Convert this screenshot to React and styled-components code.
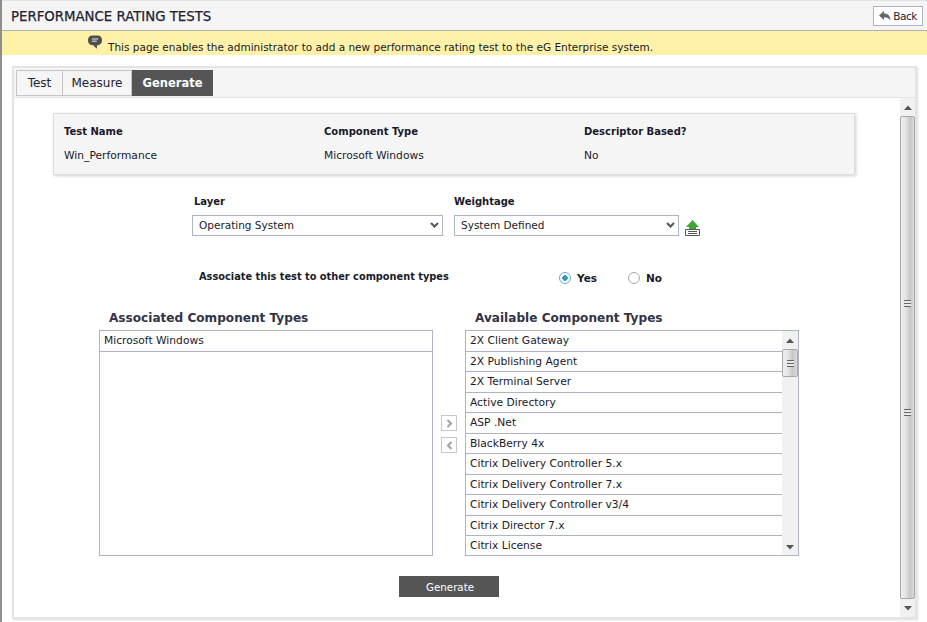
import styled, { createGlobalStyle } from "styled-components";

const GlobalStyle = createGlobalStyle`
  html, body {
    margin: 0;
    padding: 0;
    background: #ffffff;
    overflow: hidden;
  }
  body {
    font-family: "DejaVu Sans", Verdana, sans-serif;
    font-size: 11px;
    color: #1a1a2a;
  }
`;

const Page = styled.div`
  width: 927px;
  height: 622px;
  box-sizing: border-box;
  border-left: 2px solid #8e8e8e;
  display: flex;
  flex-direction: column;
  overflow: hidden;
`;

const TitleBar = styled.div`
  height: 31px;
  box-sizing: border-box;
  flex: none;
  display: flex;
  align-items: center;
  justify-content: space-between;
  padding: 0 4px 0 9px;
  background: #f5f5f5;
  border-top: 1px solid #e2e2e2;
  border-bottom: 1px solid #aeb2bc;
`;

const Title = styled.div`
  font-size: 13.3px;
  font-weight: 400;
  margin-top: 2px;
  color: #222233;
  -webkit-text-stroke: 0.25px #222233;
`;

const BackButton = styled.button`
  width: 50px;
  height: 20px;
  box-sizing: border-box;
  display: flex;
  align-items: center;
  justify-content: center;
  gap: 2px;
  padding: 0;
  background: #ffffff;
  border: 1px solid #aeb4c4;
  font: 10.5px "DejaVu Sans", sans-serif;
  letter-spacing: -0.5px;
  color: #222233;
`;

const Notice = styled.div`
  height: 24px;
  flex: none;
  display: flex;
  align-items: flex-end;
  background: #fff2a8;
  padding-left: 85px;
  box-sizing: border-box;
`;

const NoticeIcon = styled.svg`
  margin-bottom: 5px;
  flex: none;
`;

const NoticeText = styled.span`
  font-size: 10.5px;
  line-height: 15px;
  margin-left: 5px;
  white-space: nowrap;
`;

const Panel = styled.div`
  margin: 11px 10px 3px 10px;
  flex: 1;
  min-height: 0;
  border: 2px solid #e4e4e4;
  display: flex;
  flex-direction: column;
  box-shadow: 1px 1px 2px #dddddd;
`;

const TabBar = styled.div`
  flex: none;
  height: 30px;
  box-sizing: border-box;
  background: #f5f5f5;
  border-bottom: 1px solid #e4e4e4;
  padding: 2px 0 0 2px;
  display: flex;
  align-items: flex-start;
`;

const Tab = styled.div`
  width: ${({ $width }) => $width}px;
  height: 26px;
  box-sizing: border-box;
  display: flex;
  align-items: center;
  justify-content: center;
  font-size: ${({ $active }) => ($active ? "11.5px" : "12px")};
  background: ${({ $active }) => ($active ? "#555555" : "#f5f5f5")};
  color: ${({ $active }) => ($active ? "#ffffff" : "#222233")};
  font-weight: ${({ $active }) => ($active ? 700 : 400)};
  border: ${({ $active }) => ($active ? "none" : "1px solid #c4c4c4")};
  border-left: ${({ $first }) => ($first ? "1px solid #c4c4c4" : "none")};
`;

const Body = styled.div`
  flex: 1;
  min-height: 0;
  display: flex;
  background: #ffffff;
`;

const Content = styled.div`
  flex: 1;
  min-width: 0;
  padding-top: 15px;
  display: flex;
  flex-direction: column;
`;

const SummaryCard = styled.div`
  margin: 0 45px 0 39px;
  height: 62px;
  box-sizing: border-box;
  background: #f5f5f5;
  border: 1px solid #dedede;
  box-shadow: 1px 1px 3px #d0d0d0;
  display: grid;
  grid-template-columns: 260px 260px 1fr;
  grid-template-rows: 1fr 1fr;
  align-items: center;
  padding: 5px 10px 7px 10px;
`;

const SummaryHead = styled.div`
  font-weight: 700;
  font-size: 10px;
`;

const SummaryValue = styled.div`
  font-size: 10.7px;
`;

const SelectRow = styled.div`
  margin: 20px 0 0 178px;
  display: flex;
  gap: 11px;
  align-items: flex-end;
`;

const Field = styled.div`
  width: ${({ $width }) => $width}px;
`;

const FieldLabel = styled.div`
  font-weight: 700;
  font-size: 10px;
  margin: 0 0 6px ${({ $indent }) => $indent || 0}px;
  line-height: 14px;
`;

const SelectBox = styled.div`
  height: 21px;
  box-sizing: border-box;
  border: 1px solid #aeb4c4;
  display: flex;
  align-items: center;
  justify-content: space-between;
  padding: 0 3px 1px 6px;
  font-size: 10.5px;
`;

const UploadIcon = styled.svg`
  margin: 0 0 0 -5px;
  flex: none;
`;

const AssociateRow = styled.div`
  margin: 33px 0 0 185px;
  display: flex;
  align-items: center;
  height: 16px;
`;

const AssociateLabel = styled.div`
  width: 360px;
  font-weight: 700;
  font-size: 9.8px;
  position: relative;
  top: -1px;
`;

const RadioOption = styled.label`
  display: flex;
  align-items: center;
  gap: 6px;
  width: 69px;
  font-weight: 700;
  font-size: 10.5px;
  position: relative;
  top: 1px;
`;

const RadioDot = styled.span`
  width: 12px;
  height: 12px;
  box-sizing: border-box;
  border-radius: 50%;
  border: 1px solid ${({ $on }) => ($on ? "#6aa9c9" : "#a9a9a9")};
  background: ${({ $on }) => ($on ? "radial-gradient(circle, #2f97c6 0 2.5px, #ffffff 3px)" : "#ffffff")};
`;

const Lists = styled.div`
  margin: 25px 0 0 85px;
  display: flex;
  align-items: flex-end;
`;

const ListColumn = styled.div`
  width: 334px;
`;

const ListTitle = styled.div`
  font-size: 12.1px;
  font-weight: 700;
  color: #333344;
  line-height: 16px;
  margin: 0 0 4px 10px;
`;

const ListBox = styled.div`
  height: 226px;
  box-sizing: border-box;
  border: 1px solid #aeb4c4;
  display: flex;
  overflow: hidden;
`;

const ListRows = styled.div`
  flex: 1;
  min-width: 0;
`;

const ListRow = styled.div`
  height: 20.5px;
  box-sizing: border-box;
  line-height: 20px;
  padding-left: 4px;
  font-size: 10.7px;
  border-bottom: ${({ $last }) => ($last ? "none" : "1px solid #aeb4c4")};
  white-space: nowrap;
`;

const MoveButtons = styled.div`
  width: 32px;
  flex: none;
  display: flex;
  flex-direction: column;
  align-items: center;
  gap: 6px;
  padding-bottom: 103px;
`;

const MoveButton = styled.div`
  width: 16px;
  height: 16px;
  box-sizing: border-box;
  border: 1px solid #c2c7d2;
  background: #ffffff;
  display: flex;
  align-items: center;
  justify-content: center;
`;

const GenerateWrap = styled.div`
  margin: 20px 0 0 385px;
`;

const GenerateButton = styled.button`
  width: 100px;
  height: 21px;
  border: none;
  padding: 0 0 0 2px;
  background: #555555;
  color: #ffffff;
  font: 10.3px "DejaVu Sans", sans-serif;
`;

const ScrollTrack = styled.div`
  width: ${({ $width }) => $width}px;
  flex: none;
  background: #f1f1f1;
  display: flex;
  flex-direction: column;
  align-items: stretch;
  box-sizing: border-box;
`;

const ScrollArrow = styled.div`
  height: ${({ $height }) => $height}px;
  flex: none;
  display: flex;
  align-items: center;
  justify-content: center;
  color: #555555;
`;

const ScrollThumb = styled.div`
  flex: ${({ $height }) => ($height ? "none" : 1)};
  height: ${({ $height }) => ($height ? `${$height}px` : "auto")};
  box-sizing: border-box;
  border: 1px solid #a8a8a8;
  border-radius: 2px;
  background: linear-gradient(to right, #f0f0f0, #e2e2e2 40%, #c6c6ca 70%, #dcdcdc);
  display: flex;
  flex-direction: column;
  justify-content: center;
  gap: ${({ $gap }) => $gap || 0}px;
  align-items: center;
`;

const ScrollSpacer = styled.div`
  flex: 1;
`;

const GripLines = styled.div`
  width: 7px;
  height: 7px;
  background: repeating-linear-gradient(to bottom, #666666 0 1px, #e8e8e8 1px 3px);
`;

const Arrow = ({ down }) => (
  <svg width="8" height="5" viewBox="0 0 8 5">
    <path d={down ? "M0 0H8L4 4.5Z" : "M0 5H8L4 0.5Z"} fill="#555555" />
  </svg>
);

const Chevron = () => (
  <svg width="9" height="6" viewBox="0 0 9 6">
    <path d="M1 1L4.5 4.5L8 1" fill="none" stroke="#555555" strokeWidth="2" />
  </svg>
);

const available = [
  "2X Client Gateway",
  "2X Publishing Agent",
  "2X Terminal Server",
  "Active Directory",
  "ASP .Net",
  "BlackBerry 4x",
  "Citrix Delivery Controller 5.x",
  "Citrix Delivery Controller 7.x",
  "Citrix Delivery Controller v3/4",
  "Citrix Director 7.x",
  "Citrix License",
];

export default function App() {
  return (
    <Page>
      <GlobalStyle />
      <TitleBar>
        <Title>PERFORMANCE RATING TESTS</Title>
        <BackButton>
          <svg width="12" height="10" viewBox="0 0 12 10">
            <path d="M0 4.5L5 0V2.6C9 2.6 11.5 5 11.5 9.5C10 6.8 8 6.2 5 6.2V9Z" fill="#666666" />
          </svg>
          Back
        </BackButton>
      </TitleBar>
      <Notice>
        <NoticeIcon width="16" height="15" viewBox="0 0 18 17">
          <path d="M6 0.5H12C15 0.5 17 2.5 17 6C17 9.5 15 11.5 12 11.5H11.5L11 15.5L7 11.5H6C3 11.5 1 9.5 1 6C1 2.5 3 0.5 6 0.5Z" fill="#505050" />
          <path d="M5.5 4.5H12.5M5.5 7H11" stroke="#ffffff" strokeWidth="1" />
        </NoticeIcon>
        <NoticeText>This page enables the administrator to add a new performance rating test to the eG Enterprise system.</NoticeText>
      </Notice>
      <Panel>
        <TabBar>
          <Tab $first $width={47}>Test</Tab>
          <Tab $width={69}>Measure</Tab>
          <Tab $active $width={81}>Generate</Tab>
        </TabBar>
        <Body>
          <Content>
            <SummaryCard>
              <SummaryHead>Test Name</SummaryHead>
              <SummaryHead>Component Type</SummaryHead>
              <SummaryHead>Descriptor Based?</SummaryHead>
              <SummaryValue>Win_Performance</SummaryValue>
              <SummaryValue>Microsoft Windows</SummaryValue>
              <SummaryValue>No</SummaryValue>
            </SummaryCard>
            <SelectRow>
              <Field $width={251}>
                <FieldLabel $indent={2}>Layer</FieldLabel>
                <SelectBox>
                  Operating System
                  <Chevron />
                </SelectBox>
              </Field>
              <Field $width={225}>
                <FieldLabel>Weightage</FieldLabel>
                <SelectBox>
                  System Defined
                  <Chevron />
                </SelectBox>
              </Field>
              <UploadIcon width="15" height="16" viewBox="0 0 15 16">
                <path d="M7.5 0L14 7H11V9.5H4V7H1Z" fill="#3fa535" />
                <path d="M0.5 9.5H14.5V15.5H0.5Z" fill="#ffffff" stroke="#555555" />
                <path d="M3 11.5H12M3 13.5H12" stroke="#555555" />
              </UploadIcon>
            </SelectRow>
            <AssociateRow>
              <AssociateLabel>Associate this test to other component types</AssociateLabel>
              <RadioOption>
                <RadioDot $on />
                Yes
              </RadioOption>
              <RadioOption>
                <RadioDot />
                No
              </RadioOption>
            </AssociateRow>
            <Lists>
              <ListColumn>
                <ListTitle>Associated Component Types</ListTitle>
                <ListBox>
                  <ListRows>
                    <ListRow>Microsoft Windows</ListRow>
                  </ListRows>
                </ListBox>
              </ListColumn>
              <MoveButtons>
                <MoveButton>
                  <svg width="7" height="9" viewBox="0 0 7 9">
                    <path d="M1.5 1L5 4.5L1.5 8" fill="none" stroke="#a0a0a0" strokeWidth="2" />
                  </svg>
                </MoveButton>
                <MoveButton>
                  <svg width="7" height="9" viewBox="0 0 7 9">
                    <path d="M5.5 1L2 4.5L5.5 8" fill="none" stroke="#a0a0a0" strokeWidth="2" />
                  </svg>
                </MoveButton>
              </MoveButtons>
              <ListColumn>
                <ListTitle>Available Component Types</ListTitle>
                <ListBox>
                  <ListRows>
                    {available.map((name, i) => (
                      <ListRow key={name} $last={i === available.length - 1}>
                        {name}
                      </ListRow>
                    ))}
                  </ListRows>
                  <ScrollTrack $width={16}>
                    <ScrollArrow $height={18}>
                      <Arrow />
                    </ScrollArrow>
                    <ScrollThumb $height={28}>
                      <GripLines />
                    </ScrollThumb>
                    <ScrollSpacer />
                    <ScrollArrow $height={16}>
                      <Arrow down />
                    </ScrollArrow>
                  </ScrollTrack>
                </ListBox>
              </ListColumn>
            </Lists>
            <GenerateWrap>
              <GenerateButton>Generate</GenerateButton>
            </GenerateWrap>
          </Content>
          <ScrollTrack $width={15}>
            <ScrollArrow $height={18}>
              <Arrow />
            </ScrollArrow>
            <ScrollThumb $gap={102}>
              <GripLines />
              <GripLines />
            </ScrollThumb>
            <ScrollArrow $height={18}>
              <Arrow down />
            </ScrollArrow>
          </ScrollTrack>
        </Body>
      </Panel>
    </Page>
  );
}
